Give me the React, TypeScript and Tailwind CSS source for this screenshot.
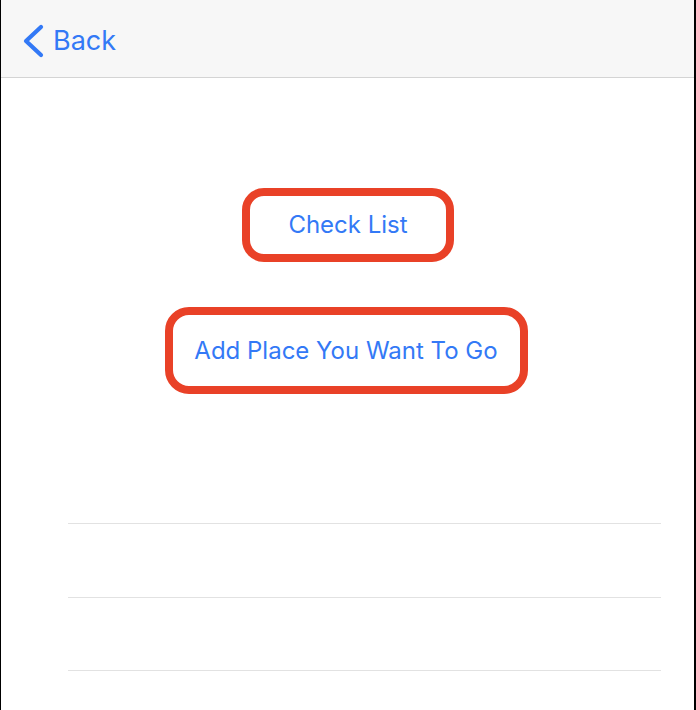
import React from "react";

export default function App() {
  return (
    <div
      className="w-[696px] h-[710px] bg-black flex overflow-hidden"
      style={{ fontFamily: "Inter, 'Liberation Sans', sans-serif" }}
    >
      <div className="ml-[1px] w-[693px] h-full bg-white flex flex-col">
        <div className="h-[78px] bg-[#f7f7f7] border-b border-[#d4d4d4] flex items-center pl-[21px] shrink-0">
          <div className="flex items-center gap-[9px] text-[#3379f6] mt-[4px]">
            <svg width="22" height="34" viewBox="0 0 22 34" fill="none">
              <path
                d="M19 3 L4 17 L19 31"
                stroke="#3379f6"
                strokeWidth="4.2"
                strokeLinecap="round"
                strokeLinejoin="round"
              />
            </svg>
            <span className="text-[27px] leading-none">Back</span>
          </div>
        </div>
        <div className="flex flex-col items-center pt-[110px]">
          <div className="w-[212px] h-[74px] border-[8px] border-[#e94127] rounded-[22px] flex items-center justify-center text-[#3379f6] text-[24px] ml-[1px]">
            Check List
          </div>
          <div className="mt-[45px] w-[363px] h-[87px] border-[8px] border-[#e94127] rounded-[24px] flex items-center justify-center text-[#3379f6] text-[24px] ml-[-3px]">
            Add Place You Want To Go
          </div>
        </div>
        <div className="mt-[129px] ml-[67px] w-[593px] flex flex-col">
          <div className="h-[1px] bg-[#e2e2e2]" />
          <div className="h-[73px]" />
          <div className="h-[1px] bg-[#e2e2e2]" />
          <div className="h-[72px]" />
          <div className="h-[1px] bg-[#e2e2e2]" />
        </div>
      </div>
    </div>
  );
}
